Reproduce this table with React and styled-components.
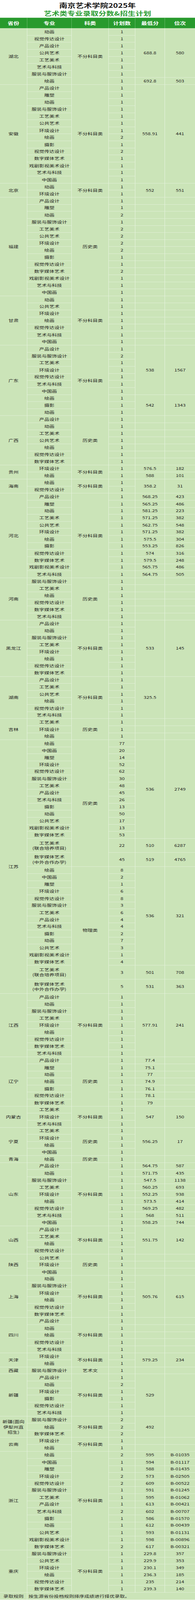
import React from 'react';
import styled, { createGlobalStyle } from 'styled-components';

const GREEN = '#289a2d';
const BODY = '#cbe4b8';
const LINE = '#e8f3e0';
const UNIT = 24.63;
const PAGE_H = 5592;
const COLS = '70px 114px 95px 68px 76px 77px';

const Global = createGlobalStyle`
  html, body {
    margin: 0;
    padding: 0;
    background: #fff;
  }
  body {
    font-family: "Noto Sans CJK SC", "Noto Sans", sans-serif;
  }
  * { box-sizing: border-box; }
`;

// the browser window may be shorter than the sheet, so the sheet is squeezed to fit it
const Frame = styled.div`
  width: 500px;
  overflow: hidden;
`;

const Page = styled.div`
  width: 500px;
  height: ${PAGE_H}px;
  background: #fff;
  transform-origin: top left;
`;

const Heading = styled.div`
  height: 62px;
  padding-top: 4px;
  text-align: center;
`;

const Title = styled.div`
  font-size: 21px;
  line-height: 28px;
  font-weight: 700;
  color: #151515;
`;

const SubTitle = styled.div`
  font-size: 20px;
  line-height: 28px;
  font-weight: 700;
  color: #2c9d34;
`;

const HeaderRow = styled.div`
  display: grid;
  grid-template-columns: ${COLS};
  height: 37px;
  background: ${GREEN};
`;

const Th = styled.div`
  display: flex;
  align-items: center;
  justify-content: center;
  color: #fff;
  font-size: 15px;
  font-weight: 700;
  border-right: 1px solid rgba(255, 255, 255, 0.3);
  &:last-child { border-right: none; }
`;

const Body = styled.div`
  display: grid;
  grid-template-columns: ${COLS};
  grid-auto-rows: ${UNIT}px;
  background: ${BODY};
`;

const Cell = styled.div`
  grid-column: ${p => p.$col};
  grid-row: span ${p => p.$span || 1};
  display: flex;
  align-items: center;
  justify-content: center;
  text-align: center;
  padding: 0 2px;
  border-right: ${p => (p.$col === 6 ? 'none' : `1px solid ${LINE}`)};
  border-bottom: 1px solid ${LINE};
  color: #1f231c;
  font-size: 13px;
  line-height: ${p => (p.$tight ? 18 : 16)}px;
  white-space: pre-line;
  overflow: hidden;
`;

const Footer = styled.div`
  display: grid;
  grid-template-columns: 70px 1fr;
  height: 25px;
  background: ${BODY};
`;

const FootLabel = styled.div`
  display: flex;
  align-items: center;
  justify-content: center;
  border-right: 1px solid ${LINE};
  color: #1f231c;
  font-size: 13px;
`;

const FootText = styled.div`
  display: flex;
  align-items: center;
  padding-left: 3px;
  color: #1f231c;
  font-size: 13px;
`;

const h = (a, b) => [...a, ...b];

const DATA = [
  { p: '湖北', cat: [['不分科目类', 8]], score: [['688.8', 7], ['692.8', 1]], rank: [['580', 7], ['503', 1]],
    rows: ['动画|1', '视觉传达设计|1', '产品设计|1', '公共艺术|1', '工艺美术|1', '艺术与科技|1', '服装与服饰设计|1', '绘画|1'] },
  { p: '安徽', cat: [['不分科目类', 14]], score: [['558.91', 14]], rank: [['441', 14]],
    rows: ['产品设计|1', '雕塑|1', '动画|1', '服装与服饰设计|1', '工艺美术|1', '公共艺术|1', '环境设计|1', '绘画|2', '摄影|1', '视觉传达设计|2', '数字媒体艺术|1', '戏剧影视美术设计|1', '艺术与科技|1', '中国画|1'] },
  { p: '北京', cat: [['不分科目类', 2]], score: [['552', 2]], rank: [['551', 2]], rows: ['动画|1', '环境设计|1'] },
  { p: '福建', cat: [['历史类', 14]],
    rows: ['产品设计|1', '雕塑|1', '动画|2', '服装与服饰设计|1', '工艺美术|2', '公共艺术|2', '环境设计|2', '绘画|2', '摄影|1', '视觉传达设计|1', '数字媒体艺术|2', '戏剧影视美术设计|1', '艺术与科技|1', '中国画|1'] },
  { p: '甘肃', cat: [['不分科目类', 7]],
    rows: ['动画|1', '公共艺术|1', '环境设计|1', '绘画|1', '视觉传达设计|1', '艺术与科技|1', '中国画|1'] },
  { p: '广东', cat: [['不分科目类', 10]], score: [['538', 7], ['542', 3]], rank: [['1567', 7], ['1343', 3]],
    rows: ['产品设计|1', '服装与服饰设计|2', '工艺美术|1', '环境设计|1', '视觉传达设计|1', '艺术与科技|1', '中国画|1', '绘画|1', '摄影|1', '动画|1'] },
  { p: '广西', cat: [['历史类', 7]],
    rows: ['产品设计|1', '动画|1', '工艺美术|1', '公共艺术|1', '绘画|1', '视觉传达设计|1', '数字媒体艺术|1'] },
  { p: '贵州', cat: [['不分科目类', 2]], rows: ['环境设计|1|576.5|182', '绘画|1|588|101'] },
  { p: '海南', cat: [['不分科目类', 2]], score: [['358.2', 2]], rank: [['31', 2]], rows: ['绘画|1', '视觉传达设计|1'] },
  { p: '河北', cat: [['不分科目类', 12]],
    rows: ['产品设计|1|568.25|423', '雕塑|1|565.25|486', '动画|1|581.25|223', '工艺美术|1|571.25|382', '公共艺术|1|562.75|548', '环境设计|1|571.25|382', '绘画|1|575.5|304', '摄影|1|553.25|826', '视觉传达设计|1|574|316', '数字媒体艺术|1|579.5|248', '戏剧影视美术设计|1|565.75|486', '艺术与科技|1|564.75|505'] },
  { p: '河南', cat: [['历史类', 6]],
    rows: ['服装与服饰设计|1', '工艺美术|1', '绘画|1', '视觉传达设计|1', '数字媒体艺术|1', '艺术与科技|1'] },
  { p: '黑龙江', cat: [['不分科目类', 8]], score: [['533', 8]], rank: [['145', 8]],
    rows: ['产品设计|1', '动画|1', '服装与服饰设计|1', '工艺美术|1', '环境设计|1', '绘画|1', '视觉传达设计|1', '数字媒体艺术|1'] },
  { p: '湖南', cat: [['不分科目类', 6]], score: [['325.5', 6]], rank: [['', 6]],
    rows: ['产品设计|1', '工艺美术|1', '公共艺术|1', '绘画|1', '视觉传达设计|1', '艺术与科技|1'] },
  { p: '吉林', cat: [['历史类', 3]], rows: ['工艺美术|1', '环境设计|1', '绘画|1'] },
  { p: '江苏', cat: [['历史类', 16], ['物理类', 16]],
    score: [['536', 14], ['510', 1], ['519', 1], ['536', 14], ['501', 1], ['531', 1]],
    rank: [['2749', 14], ['6287', 1], ['4765', 1], ['321', 14], ['708', 1], ['363', 1]],
    rows: h(
      ['绘画|77', '中国画|20', '雕塑|14', '环境设计|52', '视觉传达设计|62', '服装与服饰设计|30', '工艺美术|48', '产品设计|45', '艺术与科技|26', '摄影|13', '动画|50', '公共艺术|17', '戏剧影视美术设计|13', '数字媒体艺术|53', '工艺美术\n(联合培养项目)|22', '数字媒体艺术\n(中外合作办学)|45'],
      ['绘画|8', '中国画|2', '雕塑|1', '环境设计|6', '视觉传达设计|8', '服装与服饰设计|3', '工艺美术|6', '产品设计|4', '艺术与科技|4', '摄影|2', '动画|7', '公共艺术|3', '戏剧影视美术设计|1', '数字媒体艺术|4', '工艺美术\n(联合培养项目)|3', '数字媒体艺术\n(中外合作办学)|5']
    ) },
  { p: '江西', cat: [['不分科目类', 9]], score: [['577.91', 9]], rank: [['241', 9]],
    rows: ['产品设计|1', '动画|1', '服装与服饰设计|1', '工艺美术|1', '环境设计|1', '绘画|1', '视觉传达设计|1', '数字媒体艺术|1', '艺术与科技|1'] },
  { p: '辽宁', cat: [['历史类', 7]],
    rows: ['产品设计|1|77.4', '雕塑|1|75.1', '动画|1|77', '绘画|1|74.9', '摄影|1|76.1', '视觉传达设计|1|78.1', '数字媒体艺术|1|79'] },
  { p: '内蒙古', cat: [['不分科目类', 3]], score: [['547', 3]], rank: [['150', 3]], rows: ['工艺美术|1', '环境设计|1', '艺术与科技|1'] },
  { p: '宁夏', cat: [['历史类', 4]], score: [['556.25', 4]], rank: [['17', 4]], rows: ['工艺美术|1', '环境设计|1', '绘画|1', '中国画|1'] },
  { p: '青海', cat: [['历史类', 1]], rows: ['绘画|1'] },
  { p: '山东', cat: [['不分科目类', 9]],
    rows: ['产品设计|1|564.75|587', '动画|1|571.75|435', '服装与服饰设计|1|547.5|1138', '工艺美术|1|560.25|693', '环境设计|1|552.25|938', '绘画|1|573.5|414', '视觉传达设计|1|569.25|482', '艺术与科技|1|568|511', '中国画|1|558.25|744'] },
  { p: '山西', cat: [['不分科目类', 4]], score: [['551.75', 4]], rank: [['142', 4]], rows: ['产品设计|1', '工艺美术|1', '绘画|1', '视觉传达设计|1'] },
  { p: '陕西', cat: [['历史类', 3]], rows: ['公共艺术|1', '环境设计|1', '中国画|1'] },
  { p: '上海', cat: [['不分科目类', 6]], score: [['505.76', 6]], rank: [['615', 6]],
    rows: ['动画|1', '服装与服饰设计|1', '环境设计|1', '绘画|1', '视觉传达设计|1', '数字媒体艺术|1'] },
  { p: '四川', cat: [['不分科目类', 5]], rows: ['产品设计|1', '动画|1', '绘画|1', '视觉传达设计|1', '艺术与科技|1'] },
  { p: '天津', cat: [['不分科目类', 2]], score: [['579.25', 2]], rank: [['234', 2]], rows: ['环境设计|1', '绘画|1'] },
  { p: '西藏', cat: [['艺术文', 1]], rows: ['服装与服饰设计|1'] },
  { p: '新疆', cat: [['不分科目类', 6]], score: [['529', 6]], rank: [['', 6]],
    rows: ['产品设计|1', '动画|2', '环境设计|1', '摄影|1', '视觉传达设计|1', '艺术与科技|1'] },
  { p: '新疆(面向\n伊犁州直\n招生)', cat: [['不分科目类', 3]], score: [['492', 3]], rank: [['', 3]],
    rows: ['服装与服饰设计|2', '绘画|2', '数字媒体艺术|2'] },
  { p: '云南', cat: [['不分科目类', 2]], rows: ['环境设计|1', '绘画|1'] },
  { p: '浙江', cat: [['不分科目类', 14]],
    rows: ['绘画|2|595|B-01035', '中国画|1|594|B-01117', '雕塑|1|588|B-01435', '环境设计|2|573|B-02505', '视觉传达设计|2|609|B-00522', '服装与服饰设计|1|591|B-01245', '工艺美术|1|595|B-01062', '产品设计|1|613|B-00421', '艺术与科技|2|602|B-00707', '摄影|1|586|B-01570', '动画|1|612|B-00439', '公共艺术|1|593|B-01131', '戏剧影视美术设计|1|598|B-00896', '数字媒体艺术|2|617|B-00321'] },
  { p: '重庆', cat: [['不分科目类', 6]],
    rows: ['服装与服饰设计|1|229.8|357', '公共艺术|1|229.9|353', '环境设计|1|230.1|349', '绘画|1|236.3|185', '视觉传达设计|1|235|214', '数字媒体艺术|1|239.3|140'] },
];

// turn [[text, rowCount]] into a per-row list: the first row of a span holds [text, units], the rest null
function spans(segs, rows, units, idx) {
  if (!segs) return rows.map((r, i) => [r[idx] ?? '', units[i]]);
  const out = [];
  let i = 0;
  segs.forEach(([t, n]) => {
    let u = 0;
    for (let k = 0; k < n; k++) u += units[i + k];
    out.push([t, u]);
    for (let k = 1; k < n; k++) out.push(null);
    i += n;
  });
  return out;
}

function Province({ g }) {
  const rows = g.rows.map(s => s.split('|'));
  const units = rows.map(r => (r[0].includes('\n') ? 2 : 1));
  const total = units.reduce((a, b) => a + b, 0);
  const cat = spans(g.cat, rows, units, -1);
  const score = spans(g.score, rows, units, 2);
  const rank = spans(g.rank, rows, units, 3);
  const cells = [];
  rows.forEach((r, i) => {
    if (i === 0) cells.push(<Cell key="p" $col={1} $span={total} $tight>{g.p}</Cell>);
    cells.push(<Cell key={`m${i}`} $col={2} $span={units[i]} $tight={units[i] > 1}>{r[0]}</Cell>);
    if (cat[i]) cells.push(<Cell key={`c${i}`} $col={3} $span={cat[i][1]}>{cat[i][0]}</Cell>);
    cells.push(<Cell key={`n${i}`} $col={4} $span={units[i]}>{r[1]}</Cell>);
    if (score[i]) cells.push(<Cell key={`s${i}`} $col={5} $span={score[i][1]}>{score[i][0]}</Cell>);
    if (rank[i]) cells.push(<Cell key={`r${i}`} $col={6} $span={rank[i][1]}>{rank[i][0]}</Cell>);
  });
  return cells;
}

export default function App() {
  const fit = typeof window === 'undefined' ? 1 : Math.min(1, window.innerHeight / PAGE_H);
  return (
    <Frame style={{ height: PAGE_H * fit }}>
      <Global />
      <Page style={{ transform: `scaleY(${fit})` }}>
        <Heading>
          <Title>南京艺术学院2025年</Title>
          <SubTitle>艺术类专业录取分数&amp;招生计划</SubTitle>
        </Heading>
        <HeaderRow>
          <Th>省份</Th>
          <Th>专业</Th>
          <Th>科类</Th>
          <Th>计划数</Th>
          <Th>最低分</Th>
          <Th>位次</Th>
        </HeaderRow>
        <Body>
          {DATA.map(g => <Province key={g.p} g={g} />)}
        </Body>
        <Footer>
          <FootLabel>录取规则</FootLabel>
          <FootText>按生源省份投档规则排序成绩进行择优录取。</FootText>
        </Footer>
      </Page>
    </Frame>
  );
}
